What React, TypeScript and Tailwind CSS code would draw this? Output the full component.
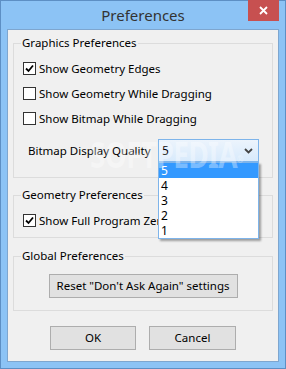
import { useState } from 'react';

const font = { fontFamily: '"Noto Sans", "Open Sans", sans-serif' };

interface CheckProps {
  label: string;
  checked: boolean;
}

const Check = ({ label, checked }: CheckProps) => (
  <div className="flex h-[25px] items-center gap-[3px] pl-[9px]">
    <span className="flex h-[13px] w-[13px] items-center justify-center border border-[#333333] bg-white">
      {checked && (
        <svg width="9" height="9" viewBox="0 0 9 9">
          <path d="M1 4.5 L3.5 7 L8 1.5" fill="none" stroke="#000" strokeWidth="1.8" />
        </svg>
      )}
    </span>
    <span>{label}</span>
  </div>
);

const Group = ({ title, children, className }: { title: string; children: React.ReactNode; className?: string }) => (
  <fieldset className={`mx-[5px] border border-[#dcdcdc] ${className ?? ''}`}>
    <legend className="ml-[7px] px-[1px] leading-[16px]">{title}</legend>
    {children}
  </fieldset>
);

const Button = ({ label, className }: { label: string; className?: string }) => (
  <button className={`h-[24px] border border-[#adadad] bg-[#e1e1e1] text-[11.5px] text-black ${className ?? ''}`}>
    {label}
  </button>
);

const App = () => {
  const [quality] = useState('5');
  const options = ['5', '4', '3', '2', '1'];

  return (
    <div className="h-[369px] w-[286px] border border-[#5d8fc4] bg-[#8cc3f5] text-[11.5px] text-black" style={font}>
      <div className="relative flex h-[28px] items-center justify-center">
        <span className="text-[15px] text-[#333333]">Preferences</span>
        <div className="absolute right-[6px] -top-[1px] flex h-[21px] w-[31px] items-center justify-center bg-[#c75050]">
          <svg width="9" height="9" viewBox="0 0 9 9">
            <path d="M1 1 L8 8 M8 1 L1 8" stroke="#fff" strokeWidth="1.8" />
          </svg>
        </div>
      </div>

      <div className="relative mx-[6px] h-[333px] border border-[#7ea6cf] bg-[#f0f0f0] pt-[5px]">
        <Group title="Graphics Preferences" className="pb-[15px]">
          <div className="pt-[5px]">
            <Check label="Show Geometry Edges" checked />
            <Check label="Show Geometry While Dragging" checked={false} />
            <Check label="Show Bitmap While Dragging" checked={false} />
          </div>
          <div className="mt-[8px] flex h-[23px] items-center pl-[14px]">
            <span className="w-[130px] shrink-0">Bitmap Display Quality</span>
            <div className="relative">
              <div className="flex h-[23px] w-[101px] items-center justify-between border border-[#7eb4ea] bg-gradient-to-b from-[#ecf4fc] to-[#d8eafc] pl-[3px] pr-[5px]">
                <span className="text-[12px]">{quality}</span>
                <svg width="9" height="6" viewBox="0 0 9 6">
                  <path d="M1 1 L4.5 4.5 L8 1" fill="none" stroke="#444" strokeWidth="1.8" />
                </svg>
              </div>
              <ul className="absolute left-0 top-[23px] z-10 w-[101px] border border-[#7eb4ea] bg-white text-[12px] shadow-[2px_2px_2px_rgba(0,0,0,0.35)]">
                {options.map((o) => (
                  <li
                    key={o}
                    className={`flex h-[15px] items-center pl-[2px] ${o === quality ? 'bg-[#3399ff] text-white' : ''}`}
                  >
                    {o}
                  </li>
                ))}
              </ul>
            </div>
          </div>
        </Group>

        <Group title="Geometry Preferences" className="mt-[9px] pb-[4px]">
          <div className="pt-[5px]">
            <Check label="Show Full Program Zero" checked />
          </div>
        </Group>

        <Group title="Global Preferences" className="mt-[10px] pb-[12px]">
          <div className="flex justify-center pt-[10px]">
            <Button label={'Reset "Don\'t Ask Again" settings'} className="w-[189px]" />
          </div>
        </Group>

        <div className="mt-[15px] flex justify-center gap-[13px]">
          <Button label="OK" className="w-[86px]" />
          <Button label="Cancel" className="w-[87px]" />
        </div>

        <span className="pointer-events-none absolute left-[82px] top-[107px] z-20 origin-left scale-x-[0.78] whitespace-nowrap text-[36px] font-bold leading-none tracking-tight text-white/35">
          SOFTPEDIA<sup className="text-[10px]">®</sup>
        </span>
      </div>
    </div>
  );
};

export default App;
